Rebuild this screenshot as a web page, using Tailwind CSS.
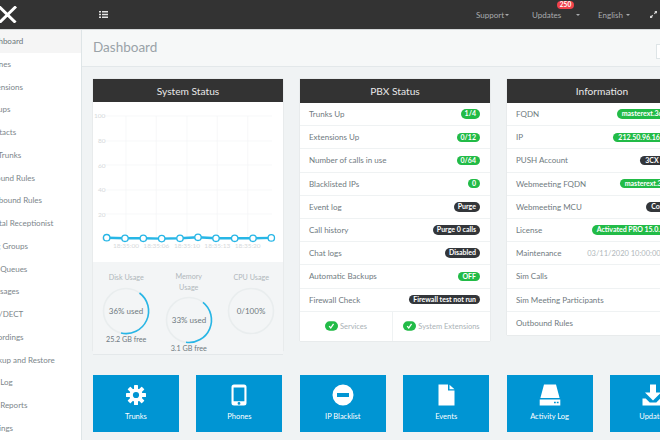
<!DOCTYPE html>
<html><head><meta charset="utf-8"><script src="https://cdn.jsdelivr.net/npm/@tailwindcss/browser@4"></script></head>
<body class="m-0">
<div class="w-[660px] h-[440px] overflow-hidden flex flex-col bg-[#f0f3f4] font-['Lato',sans-serif] text-[8px] text-[#6f7a80]">
  <header class="h-[30px] shrink-0 bg-[#333333] border-b border-[#d5d8d9] flex items-center text-[#a9acae]">
    <div class="w-[82px] shrink-0 h-full flex items-center">
      <svg width="17" height="17" viewBox="0 0 17 17" class="shrink-0 -mt-[1px]"><path d="M-1 0.5 L15.5 16.5 M16 0.5 L-0.5 16.5" stroke="#fff" stroke-width="3" fill="none"/></svg>
    </div>
    <svg width="9" height="7" viewBox="0 0 9 7" class="ml-[17px] shrink-0"><path d="M0 0h2v1.4H0zM3 0h6v1.4H3zM0 2.8h2v1.4H0zM3 2.8h6v1.4H3zM0 5.6h2V7H0zM3 5.6h6V7H3z" fill="#e4e4e4"/></svg>
    <span class="ml-[368px] flex items-center gap-[1px] w-[34px] shrink-0">Support<i class="w-0 h-0 border-x-[2px] border-x-transparent border-t-[2px] border-t-[#a9acae]"></i></span>
    <span class="ml-[22px] relative w-[28px] shrink-0">Updates<b class="absolute left-[25px] top-[-8px] h-[8px] w-[17px] rounded-full bg-[#f0424a] text-white text-[6.5px] leading-[8px] text-center font-bold">250</b></span>
    <i class="ml-[16px] w-0 h-0 shrink-0 border-x-[2px] border-x-transparent border-t-[2px] border-t-[#a9acae]"></i>
    <span class="ml-[18px] flex items-center gap-[3px] w-[32px] shrink-0">English<i class="w-0 h-0 border-x-[2px] border-x-transparent border-t-[2px] border-t-[#a9acae]"></i></span>
    <svg width="7" height="7" viewBox="0 0 8 8" class="ml-[20px] shrink-0"><path d="M0 8V5l1 1 1.6-1.6 1 1L2 7l1 1zM8 0v3L7 2 5.4 3.6l-1-1L6 1 5 0z" fill="#d8d8d8"/></svg>
  </header>
  <div class="flex flex-1 min-h-0">
    <nav class="w-[82px] shrink-0 bg-white border-r border-[#dee5e7] overflow-hidden text-[#7c868b]">
      <ul class="w-[200px] -ml-[15px]">
        <li class="h-[22.76px] leading-[22px] bg-[#f5f5f5] text-[#6b757a]">Dashboard</li>
        <li class="h-[22.76px] leading-[22px]">Phones</li>
        <li class="h-[22.76px] leading-[22px]">Extensions</li>
        <li class="h-[22.76px] leading-[22px]">Groups</li>
        <li class="h-[22.76px] leading-[22px]">Contacts</li>
        <li class="h-[22.76px] leading-[22px]">SIP Trunks</li>
        <li class="h-[22.76px] leading-[22px]">Inbound Rules</li>
        <li class="h-[22.76px] leading-[22px]">Outbound Rules</li>
        <li class="h-[22.76px] leading-[22px]">Digital Receptionist</li>
        <li class="h-[22.76px] leading-[22px]">Ring Groups</li>
        <li class="h-[22.76px] leading-[22px]">Call Queues</li>
        <li class="h-[22.76px] leading-[22px]">Messages</li>
        <li class="h-[22.76px] leading-[22px]">FXS/DECT</li>
        <li class="h-[22.76px] leading-[22px]">Recordings</li>
        <li class="h-[22.76px] leading-[22px]">Backup and Restore</li>
        <li class="h-[22.76px] leading-[22px]">Call Log</li>
        <li class="h-[22.76px] leading-[22px]">Call Reports</li>
        <li class="h-[22.76px] leading-[22px]">Settings</li>
      </ul>
    </nav>
    <main class="flex-1 min-w-0 overflow-hidden">
      <div class="h-[37px] bg-[#f6f8f8] border-b border-[#e3e8ea] pl-[11px] flex items-center">
        <h1 class="text-[13.5px] -mt-[1px] text-[#9aa3a8] font-normal">Dashboard</h1>
        <div class="ml-auto -mr-[30px] mt-[6px] w-[34px] h-[15px] bg-white border border-[#dee5e7]"></div>
      </div>
      <div class="pl-[11px] pt-[12px]">
        <div class="flex gap-[17px] items-start w-[620px]">
          <section class="w-[190px] shrink-0 h-[272px] bg-white shadow-[0_0_1px_rgba(0,0,0,0.2)] flex flex-col">
            <h2 class="h-[23px] shrink-0 bg-[#333333] text-[#e8e8e8] text-[10.2px] leading-[24px] text-center font-normal">System Status</h2>
            <svg width="190" height="160" viewBox="93 102 190 160" class="block shrink-0" font-size="6.5" fill="#d6d9db">
              <g stroke="#f4f5f6" stroke-width="0.7">
                <path d="M104 116H272M104 141H272M104 165H272M104 190H272M104 214H272"/>
                <path d="M126 116V238M156.3 116V238M187 116V238M217.3 116V238M247.7 116V238"/>
              </g>
              <text x="94" y="118">100</text><text x="98" y="143">80</text><text x="98" y="168">60</text><text x="98" y="192">40</text><text x="98" y="217">20</text><text x="102" y="240">0</text>
              <text x="126" y="247.5" text-anchor="middle">18:35:00</text><text x="156.3" y="247.5" text-anchor="middle">18:35:06</text><text x="187" y="247.5" text-anchor="middle">18:35:10</text><text x="217.3" y="247.5" text-anchor="middle">18:35:13</text><text x="247.7" y="247.5" text-anchor="middle">18:35:20</text>
              <path d="M106.7 237.7L125 238.3L143.3 238.3L161.7 238.6L180 238.3L198 237.3L216 238.3L234.7 238.3L253 238.3L271.3 237.9" fill="none" stroke="#27b6e6" stroke-width="2.4"/>
              <g fill="#fff" stroke="#27b6e6" stroke-width="1.3">
                <circle cx="106.7" cy="237.7" r="3.2"/><circle cx="125" cy="238.3" r="3.2"/><circle cx="143.3" cy="238.3" r="3.2"/><circle cx="161.7" cy="238.6" r="3.2"/><circle cx="180" cy="238.3" r="3.2"/><circle cx="198" cy="237.3" r="3.2"/><circle cx="216" cy="238.3" r="3.2"/><circle cx="234.7" cy="238.3" r="3.2"/><circle cx="253" cy="238.3" r="3.2"/><circle cx="271.3" cy="237.9" r="3.2"/>
              </g>
            </svg>
            <div class="flex-1 bg-[#f3f5f6] border-b border-[#e4e8ea] grid grid-cols-[62.5px_62.5px_62.5px] justify-start pl-[2px] pt-[10px] text-center text-[7.2px]">
              <div class="flex flex-col items-center">
                <p class="h-[11px] leading-[11px] text-[#b0b7bb]">Disk Usage</p>
                <svg width="50" height="50" viewBox="0 0 50 50" class="mt-[3px] block" font-size="8" fill="#6f7a80"><circle cx="25" cy="25" r="22.5" fill="none" stroke="#e9edee" stroke-width="1.6"/><path d="M38.5 7 A22.5 22.5 0 0 1 20 47" fill="none" stroke="#27b6e6" stroke-width="1.6"/><text x="25" y="28" text-anchor="middle">36% used</text></svg>
                <p class="leading-[10px] -mt-[1px] text-[#6f7a80]">25.2 GB free</p>
              </div>
              <div class="flex flex-col items-center">
                <p class="w-[36px] leading-[10.5px] text-[#b0b7bb]">Memory Usage</p>
                <svg width="50" height="50" viewBox="0 0 50 50" class="mt-[2px] block" font-size="8" fill="#6f7a80"><circle cx="25" cy="25" r="22.5" fill="none" stroke="#e9edee" stroke-width="1.6"/><path d="M39 7.4 A22.5 22.5 0 0 1 22 47.3" fill="none" stroke="#27b6e6" stroke-width="1.6"/><text x="25" y="28" text-anchor="middle">33% used</text></svg>
                <p class="leading-[10px] -mt-[1px] text-[#6f7a80]">3.1 GB free</p>
              </div>
              <div class="flex flex-col items-center">
                <p class="h-[11px] leading-[11px] text-[#b0b7bb]">CPU Usage</p>
                <svg width="50" height="50" viewBox="0 0 50 50" class="mt-[3px] block" font-size="8" fill="#6f7a80"><circle cx="25" cy="25" r="22.5" fill="none" stroke="#e9edee" stroke-width="1.6"/><text x="25" y="28" text-anchor="middle">0/100%</text></svg>
              </div>
            </div>
          </section>

          <section class="w-[190px] shrink-0 bg-white shadow-[0_0_1px_rgba(0,0,0,0.2)]">
            <h2 class="h-[24px] bg-[#333333] text-[#e8e8e8] text-[10.2px] leading-[24px] text-center font-normal">PBX Status</h2>
            <ul class="divide-y divide-[#eff2f3]">
              <li class="h-[23.2px] pl-[9px] pr-[10px] flex items-center justify-between">Trunks Up<b class="h-[9.5px] leading-[9.5px] px-[4px] rounded-full bg-[#22bb47] text-white text-[7px]">1/4</b></li>
              <li class="h-[23.2px] pl-[9px] pr-[10px] flex items-center justify-between">Extensions Up<b class="h-[9.5px] leading-[9.5px] px-[4px] rounded-full bg-[#22bb47] text-white text-[7px]">0/12</b></li>
              <li class="h-[23.2px] pl-[9px] pr-[10px] flex items-center justify-between">Number of calls in use<b class="h-[9.5px] leading-[9.5px] px-[4px] rounded-full bg-[#22bb47] text-white text-[7px]">0/64</b></li>
              <li class="h-[23.2px] pl-[9px] pr-[10px] flex items-center justify-between">Blacklisted IPs<b class="h-[9.5px] leading-[9.5px] px-[4px] rounded-full bg-[#22bb47] text-white text-[7px]">0</b></li>
              <li class="h-[23.2px] pl-[9px] pr-[10px] flex items-center justify-between">Event log<b class="h-[9.5px] leading-[9.5px] px-[4px] rounded-full bg-[#33363a] text-white text-[7px]">Purge</b></li>
              <li class="h-[23.2px] pl-[9px] pr-[10px] flex items-center justify-between">Call history<b class="h-[9.5px] leading-[9.5px] px-[4px] rounded-full bg-[#33363a] text-white text-[7px]">Purge 0 calls</b></li>
              <li class="h-[23.2px] pl-[9px] pr-[10px] flex items-center justify-between">Chat logs<b class="h-[9.5px] leading-[9.5px] px-[4px] rounded-full bg-[#33363a] text-white text-[7px]">Disabled</b></li>
              <li class="h-[23.2px] pl-[9px] pr-[10px] flex items-center justify-between">Automatic Backups<b class="h-[9.5px] leading-[9.5px] px-[4px] rounded-full bg-[#22bb47] text-white text-[7px]">OFF</b></li>
              <li class="h-[23.2px] pl-[9px] pr-[10px] flex items-center justify-between">Firewall Check<b class="h-[9.5px] leading-[9.5px] px-[4px] rounded-full bg-[#33363a] text-white text-[7px]">Firewall test not run</b></li>
              <li class="h-[29px] flex text-[7.5px] text-[#aab2b6]">
                <div class="w-[93px] flex items-center justify-center gap-[2px] border-r border-[#eff2f3]"><svg width="13" height="10" viewBox="0 0 14 10"><rect width="14" height="10" rx="5" fill="#22bb47"/><path d="M4.5 5.2L6.2 7.2L9.2 2.8" stroke="#fff" stroke-width="1.4" fill="none"/></svg>Services</div>
                <div class="flex-1 flex items-center justify-center gap-[2px]"><svg width="13" height="10" viewBox="0 0 14 10"><rect width="14" height="10" rx="5" fill="#22bb47"/><path d="M4.5 5.2L6.2 7.2L9.2 2.8" stroke="#fff" stroke-width="1.4" fill="none"/></svg>System Extensions</div>
              </li>
            </ul>
          </section>

          <section class="w-[190px] shrink-0 bg-white shadow-[0_0_1px_rgba(0,0,0,0.2)]">
            <h2 class="h-[24px] bg-[#333333] text-[#e8e8e8] text-[10.2px] leading-[24px] text-center font-normal">Information</h2>
            <ul class="divide-y divide-[#eff2f3]">
              <li class="h-[23.2px] pl-[9px] pr-[10px] flex items-center justify-between">FQDN<b class="mr-[7px] h-[9.5px] leading-[9.5px] px-[5px] rounded-full bg-[#22bb47] text-white text-[7px]">masterext.3cx.eu</b></li>
              <li class="h-[23.2px] pl-[9px] pr-[10px] flex items-center justify-between">IP<b class="h-[9.5px] leading-[9.5px] px-[5px] rounded-full bg-[#22bb47] text-white text-[7px]">212.50.96.165:5060</b></li>
              <li class="h-[23.2px] pl-[9px] pr-[10px] flex items-center justify-between">PUSH Account<b class="-mr-[4px] h-[9.5px] leading-[9.5px] px-[5px] rounded-full bg-[#33363a] text-white text-[7px]">3CX Account</b></li>
              <li class="h-[23.2px] pl-[9px] pr-[10px] flex items-center justify-between">Webmeeting FQDN<b class="mr-[4px] h-[9.5px] leading-[9.5px] px-[5px] rounded-full bg-[#22bb47] text-white text-[7px]">masterext.3cx.eu</b></li>
              <li class="h-[23.2px] pl-[9px] pr-[10px] flex items-center justify-between">Webmeeting MCU<b class="-mr-[3px] h-[9.5px] leading-[9.5px] px-[5px] rounded-full bg-[#33363a] text-white text-[7px]">Connected</b></li>
              <li class="h-[23.2px] pl-[9px] pr-[10px] flex items-center justify-between">License<b class="mr-[4px] h-[9.5px] leading-[9.5px] px-[5px] rounded-full bg-[#22bb47] text-white text-[7px]">Activated PRO 15.0.5 SP3</b></li>
              <li class="h-[23.2px] pl-[9px] pr-[10px] flex items-center justify-between">Maintenance<span class="mr-[13px] text-[#b0b7bb] text-[7.5px]">03/11/2020 10:00:00 PM</span></li>
              <li class="h-[23.2px] pl-[9px] pr-[10px] flex items-center">Sim Calls</li>
              <li class="h-[23.2px] pl-[9px] pr-[10px] flex items-center">Sim Meeting Participants</li>
              <li class="h-[23.2px] pl-[9px] pr-[10px] flex items-center">Outbound Rules</li>
            </ul>
          </section>
        </div>
        <div class="flex gap-[17.4px] mt-[24px] w-[660px] text-white text-[7.5px]">
          <a class="w-[86px] h-[57px] shrink-0 bg-[#0095d3] flex flex-col items-center pt-[9px]"><svg width="22" height="22" viewBox="0 0 22 22"><g transform="translate(11 11)" fill="#fff"><circle r="6.6"/><rect x="-2" y="-10" width="4" height="20" rx=".6"/><rect x="-2" y="-10" width="4" height="20" rx=".6" transform="rotate(45)"/><rect x="-2" y="-10" width="4" height="20" rx=".6" transform="rotate(90)"/><rect x="-2" y="-10" width="4" height="20" rx=".6" transform="rotate(135)"/><circle r="3.1" fill="#0095d3"/></g></svg><span class="mt-[5px] leading-[12px]">Trunks</span></a>
          <a class="w-[86px] h-[57px] shrink-0 bg-[#0095d3] flex flex-col items-center pt-[9px]"><svg width="16" height="22" viewBox="0 0 16 22"><path fill="#fff" fill-rule="evenodd" d="M3 .5h10A2.5 2.5 0 0 1 15.5 3v16a2.5 2.5 0 0 1-2.5 2.5H3A2.5 2.5 0 0 1 .5 19V3A2.5 2.5 0 0 1 3 .5zM2.6 3.5v13.8h10.8V3.5zM8 18a1.4 1.4 0 1 0 0 2.8A1.4 1.4 0 0 0 8 18z"/></svg><span class="mt-[5px] leading-[12px]">Phones</span></a>
          <a class="w-[86px] h-[57px] shrink-0 bg-[#0095d3] flex flex-col items-center pt-[9px]"><svg width="22" height="22" viewBox="0 0 22 22"><path fill="#fff" fill-rule="evenodd" d="M11 .5a10.5 10.5 0 1 0 0 21 10.5 10.5 0 0 0 0-21zM5 9h12v4H5z"/></svg><span class="mt-[5px] leading-[12px]">IP Blacklist</span></a>
          <a class="w-[86px] h-[57px] shrink-0 bg-[#0095d3] flex flex-col items-center pt-[9px]"><svg width="17" height="22" viewBox="0 0 17 22"><path fill="#fff" d="M.5.5h9.5v6h6.5v15H.5zM11.5.8l5 4.4h-5z"/></svg><span class="mt-[5px] leading-[12px]">Events</span></a>
          <a class="w-[86px] h-[57px] shrink-0 bg-[#0095d3] flex flex-col items-center pt-[9px]"><svg width="22" height="22" viewBox="0 0 22 22"><path fill="#fff" fill-rule="evenodd" d="M5 .5h12l3.6 13.6H1.4zM.7 15.6h20.6v5.9H.7zM15 17.8h1.8v1.4H15zM17.8 17.8h1.8v1.4h-1.8z"/></svg><span class="mt-[5px] leading-[12px]">Activity Log</span></a>
          <a class="w-[86px] h-[57px] shrink-0 bg-[#0095d3] flex flex-col items-center pt-[9px]"><svg width="22" height="22" viewBox="0 0 22 22"><path fill="#fff" d="M8 .5h6v8h5l-8 8-8-8h5zM.5 14.5h3.2l4 4h6.6l4-4h3.2v7H.5z"/></svg><span class="mt-[5px] leading-[12px]">Updates</span></a>
        </div>
      </div>
    </main>
  </div>
</div>
</body></html>
